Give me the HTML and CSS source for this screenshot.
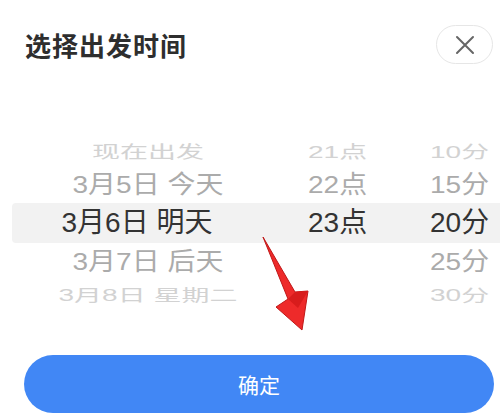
FILE: index.html
```html
<!DOCTYPE html>
<html lang="zh-CN">
<head>
    <meta charset="UTF-8">
    <meta name="viewport" content="width=device-width, initial-scale=1.0">
    <title>选择出发时间</title>
    <link rel="stylesheet" href="styles.css">
</head>
<body>
    <div class="sheet">
        <div class="header">
            <h1>选择出发时间</h1>
            <button class="close-btn">
                <svg width="20" height="20" viewBox="0 0 20 20">
                    <path d="M2 2 L18 18 M18 2 L2 18" stroke="#666" stroke-width="2" stroke-linecap="round" fill="none"/>
                </svg>
            </button>
        </div>

        <div class="picker">
            <div class="row far top">
                <span class="date">现在出发</span>
                <span class="hour">21点</span>
                <span class="min">10分</span>
            </div>
            <div class="row near">
                <span class="date">3月5日 今天</span>
                <span class="hour">22点</span>
                <span class="min">15分</span>
            </div>
            <div class="row on">
                <span class="date">3月6日 明天</span>
                <span class="hour">23点</span>
                <span class="min">20分</span>
            </div>
            <div class="row near">
                <span class="date">3月7日 后天</span>
                <span class="hour"></span>
                <span class="min">25分</span>
            </div>
            <div class="row far bottom">
                <span class="date">3月8日 星期二</span>
                <span class="hour"></span>
                <span class="min">30分</span>
            </div>
        </div>

        <button class="ok-btn">确定</button>

        <svg class="arrow" width="60" height="100" viewBox="0 0 60 100">
            <polygon points="3,1 35,56 48,55 42,94 16,71 28,63" fill="#ee2a2a" stroke="#c01818" stroke-width="1" stroke-linejoin="round"/>
            <polygon points="28,63 35,56 48,55 38,72" fill="#d81c1c"/>
        </svg>
    </div>
</body>
</html>
```

FILE: styles.css
```css
body {
    margin: 0;
    background: #fff;
    font-family: "Liberation Sans", "Noto Sans CJK SC", sans-serif;
    color: #333;
}
.sheet {
    position: relative;
    width: 500px;
    height: 418px;
    overflow: hidden;
}
.header {
    display: flex;
    justify-content: space-between;
    align-items: center;
    padding: 25px 7px 0 25px;
    height: 39px;
}
h1 {
    margin: 0;
    font-family: "Noto Sans CJK SC", sans-serif;
    font-size: 26px;
    font-weight: 600;
    color: #2e2e2e;
    letter-spacing: 1px;
}
.close-btn {
    width: 57px;
    height: 39px;
    border: 1px solid #e6e6e6;
    border-radius: 20px;
    background: #fff;
    display: flex;
    align-items: center;
    justify-content: center;
    padding: 0;
}
.picker {
    margin: 74px 0 0 12px;
}
.row {
    display: grid;
    grid-template-columns: 272px 146px 1fr;
    align-items: center;
    font-size: 28px;
    line-height: 1;
    white-space: nowrap;
}
.row span {
    display: block;
}
.date {
    text-align: center;
}
.hour {
    padding-left: 24px;
}
.row.far {
    height: 32px;
    color: #d2d2d2;
}
.row.far.top {
    height: 28px;
}
.row.far span {
    transform: scaleY(0.62);
}
.row.far.bottom span {
    transform: scaleY(0.56);
}
.row.near {
    height: 37px;
    color: #ababab;
}
.row.near span {
    transform: scaleY(0.88);
}
.row.on {
    height: 40px;
    background: #f2f2f2;
    border-radius: 4px 0 0 4px;
    color: #333;
}
.row.on .date {
    padding-right: 22px;
}
.ok-btn {
    display: block;
    margin: 43px 0 0 24px;
    width: 470px;
    height: 58px;
    border: none;
    border-radius: 29px;
    background: #4187f5;
    color: #fff;
    font-family: "Noto Sans CJK SC", sans-serif;
    font-size: 21px;
}
.arrow {
    position: absolute;
    left: 260px;
    top: 236px;
}
```
